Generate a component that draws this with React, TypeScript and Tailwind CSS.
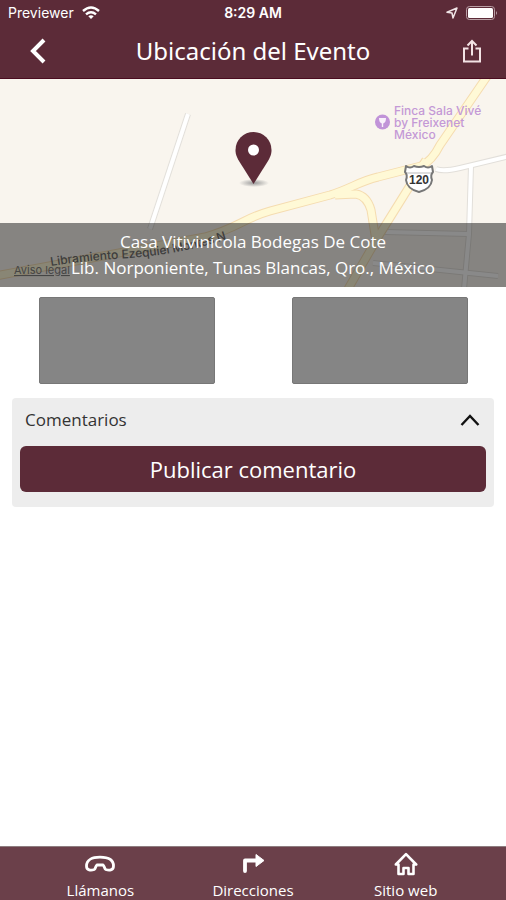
import { useState } from "react";

const actions = [
  { label: "Llámanos", href: "#llamanos", icon: <PhoneIcon /> },
  { label: "Direcciones", href: "#direcciones", icon: <TurnIcon /> },
  { label: "Sitio web", href: "#sitio", icon: <HomeIcon /> },
];

function PhoneIcon() {
  return (
    <svg width="32" height="24" viewBox="0 0 32 24" fill="none" stroke="#fff" strokeWidth="2.8" strokeLinejoin="round">
      <path d="M2.5 14C2.500 8 8 5.200 16 5.200S29.500 8 29.500 14C29.500 18.500 25 18.800 21.800 17.500C20.200 16.700 20.600 14 19 13H13C11.400 14 11.800 16.700 10.200 17.500C7 18.800 2.500 18.500 2.500 14Z" />
    </svg>
  );
}

function TurnIcon() {
  return (
    <svg width="24" height="24" viewBox="0 0 24 24">
      <path d="M4 19V8.500H16" fill="none" stroke="#fff" strokeWidth="3.800" strokeLinecap="round" strokeLinejoin="round" />
      <path d="M15 2.500L23 8.500L15 14.500Z" fill="#fff" stroke="#fff" strokeLinejoin="round" />
    </svg>
  );
}

function HomeIcon() {
  return (
    <svg width="24" height="24" viewBox="0 0 24 24" fill="none" stroke="#fff" strokeWidth="2.600" strokeLinejoin="round" strokeLinecap="round">
      <path d="M1.800 12.500L12 2.200L22.200 12.500H19.500V22H14.500V16H9.500V22H4.500V12.500Z" />
    </svg>
  );
}

function StatusBar() {
  return (
    <div className="grid grid-cols-3 items-center h-[26px] px-2 font-['Inter',sans-serif]">
      <div className="flex items-center gap-2 text-sm">
        <span>Previewer</span>
        <svg width="18" height="14" viewBox="0 0 18 14" fill="none" stroke="#fff" strokeWidth="2.400">
          <path d="M1 5Q9 -2 17 5" />
          <path d="M4 8.300Q9 4 14 8.300" />
          <path d="M6.300 10.200Q9 8.200 11.700 10.200L9 13Z" fill="#fff" stroke="none" />
        </svg>
      </div>
      <span className="text-center text-sm font-semibold">8:29 AM</span>
      <div className="flex items-center justify-end gap-2">
        <svg width="12" height="12" viewBox="0 0 12 12" fill="none" stroke="#f0e4e6" strokeWidth="1.500" strokeLinejoin="round">
          <path d="M11 1L7 11L6 6L1 5.300Z" />
        </svg>
        <svg width="32" height="14" viewBox="0 0 32 14">
          <rect x="0.500" y="0.500" width="28" height="13" rx="3" fill="none" stroke="#b99fa5" />
          <rect x="2" y="2" width="25" height="10" rx="1.500" fill="#fff" />
          <path d="M30 5Q32 7 30 9Z" fill="#b99fa5" />
        </svg>
      </div>
    </div>
  );
}

function EventMap() {
  const yellowRoads = [
    "M-5 197Q110 176 205 158C240 148 242 140 270 132L330 116C350 110 360 102 378 98L421 87Q432 82 440 66L488 -4",
    "M335 116L356 115Q367 117 371 131L376 162",
    "M426 81L378 158L348 210",
  ];
  const whiteRoads = [
    "M188 35L150 150",
    "M436 90Q443 93 460 89L510 77",
    "M471 87L469 155L464 210",
    "M385 153L469 155",
    "M373 184L498 197",
  ];
  return (
    <svg
      className="block w-full h-[208px] bg-[#f9f5ee]"
      viewBox="0 0 506 208"
      preserveAspectRatio="xMidYMid slice"
      fontFamily="Inter, sans-serif"
    >
      <defs>
        <path id="libramiento" d="M51 187Q90 181 130 179Q185 175 236 157" />
        <radialGradient id="shadow">
          <stop offset="0" stopColor="#999" />
          <stop offset="1" stopColor="#999" stopOpacity="0" />
        </radialGradient>
      </defs>
      <g fill="none" strokeLinejoin="round">
        {whiteRoads.map((d) => (
          <path key={d} d={d} stroke="#e2dfda" strokeWidth="6" />
        ))}
        {whiteRoads.map((d) => (
          <path key={d} d={d} stroke="#fff" strokeWidth="4" />
        ))}
        {yellowRoads.map((d) => (
          <path key={d} d={d} stroke="#f5dcb0" strokeWidth="9" />
        ))}
        {yellowRoads.map((d) => (
          <path key={d} d={d} stroke="#fff9d6" strokeWidth="7" />
        ))}
      </g>

      <text fontSize="12" fontWeight="500" fill="#666">
        <textPath href="#libramiento">Libramiento Ezequiel Montes N</textPath>
      </text>
      <text x="14" y="195" fontSize="11" fill="#777" textDecoration="underline">
        Aviso legal
      </text>

      <circle cx="382.500" cy="43" r="7.500" fill="#c193d8" />
      <path d="M379 39H386Q386 43.500 383.200 44.500V48H381.800V44.500Q379 43.500 379 39Z" fill="#f9f0fb" />
      <g fontSize="12" fontWeight="500" fill="#c499d6">
        <text x="394" y="36">Finca Sala Vivé</text>
        <text x="394" y="48">by Freixenet</text>
        <text x="394" y="60">México</text>
      </g>

      <path
        d="M406 87Q410 90 414 87Q419 89 424 87Q428 90 432 87L433 93Q430 96 432 101Q431 110 419 113Q407 110 406 101Q408 96 405 93Z"
        fill="#fff"
        stroke="#777"
        strokeWidth="2"
        strokeLinejoin="round"
      />
      <path d="M407 94H431" stroke="#bbb" />
      <text x="419" y="105" textAnchor="middle" fontSize="12" fontWeight="600" fill="#333" fontFamily="Liberation Sans Narrow, Liberation Sans, sans-serif">
        120
      </text>

      <ellipse cx="254" cy="104" rx="15" ry="4" fill="url(#shadow)" />
      <path
        d="M253.500 105L239 82C236 77 235.500 74 235.500 71A18 18 0 0 1 271.500 71C271.500 74 271 77 268 82Z"
        fill="#5c2b38"
      />
      <circle cx="253.500" cy="71" r="5.500" fill="#fff" />
    </svg>
  );
}

export default function App() {
  const [open, setOpen] = useState(true);

  return (
    <div className="flex flex-col min-h-screen bg-white font-['Open_Sans',sans-serif]">
      <header className="bg-[#5c2b38] text-white border-b border-[#4b0c20]">
        <StatusBar />
        <div className="grid grid-cols-[36px_1fr_36px] items-center h-[52px] px-5 pb-[2px]">
          <button aria-label="Volver" className="flex justify-center">
            <svg width="20" height="28" viewBox="0 0 20 28" fill="none" stroke="#fff" strokeWidth="4">
              <path d="M16 3L5 14L16 25" />
            </svg>
          </button>
          <h1 className="text-center text-2xl font-['Noto_Sans','Open_Sans',sans-serif]">Ubicación del Evento</h1>
          <button aria-label="Compartir" className="flex justify-end pr-1">
            <svg width="20" height="24" viewBox="0 0 20 24" fill="none" stroke="#f3e3e5" strokeWidth="2">
              <path d="M6.500 9.500H2V22.500H18V9.500H13.500M10 16.500V2.500M5.500 6.500L10 2L14.500 6.500" />
            </svg>
          </button>
        </div>
      </header>

      <main className="grow">
        <section className="relative">
          <EventMap />
          <div className="absolute inset-x-0 bottom-0 h-16 flex flex-col justify-center bg-[#141414]/50 text-center text-[17px] text-white leading-[26px]">
            <p>Casa Vitivinícola Bodegas De Cote</p>
            <p>Lib. Norponiente, Tunas Blancas, Qro., México</p>
          </div>
        </section>

        <div className="grid grid-cols-2 justify-items-center pt-[10px]">
          <div className="w-[176px] h-[87px] bg-[#858585] border border-[#777] rounded-xs"></div>
          <div className="w-[176px] h-[87px] bg-[#858585] border border-[#777] rounded-xs"></div>
        </div>

        <section className="mt-[14px] mx-3 bg-[#ededed] rounded-sm">
          <button
            className="flex items-center justify-between w-full h-12 pl-[13px] pr-[14px] pb-1 text-[#333]"
            aria-expanded={open}
            onClick={() => setOpen(!open)}
          >
            <span className="text-[17px]">Comentarios</span>
            <svg
              className={open ? "" : "rotate-180"}
              width="20"
              height="14"
              viewBox="0 0 20 14"
              fill="none"
              stroke="#111"
              strokeWidth="2.400"
            >
              <path d="M1.500 12L10 3L18.500 12" />
            </svg>
          </button>
          {open && (
            <div className="px-2 pb-[15px]">
              <button className="w-full h-[46px] rounded-md bg-[#5c2b38] text-white text-[22px]">
                Publicar comentario
              </button>
            </div>
          )}
        </section>
      </main>

      <footer className="grid grid-cols-3 h-[54px] px-6 bg-[#6b404a] border-t border-[#8e7d80] text-white">
        {actions.map((action) => (
          <a key={action.label} href={action.href} className="flex flex-col items-center pt-[5px] text-[15px] leading-5">
            {action.icon}
            <span className="pt-1">{action.label}</span>
          </a>
        ))}
      </footer>
    </div>
  );
}
